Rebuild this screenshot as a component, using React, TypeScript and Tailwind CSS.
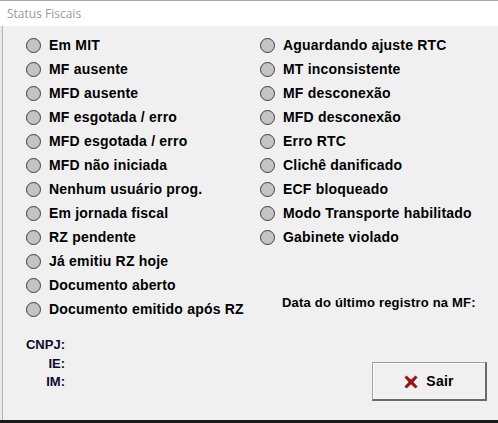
import React from "react";

const left = [
  "Em MIT",
  "MF ausente",
  "MFD ausente",
  "MF esgotada / erro",
  "MFD esgotada / erro",
  "MFD não iniciada",
  "Nenhum usuário prog.",
  "Em jornada fiscal",
  "RZ pendente",
  "Já emitiu RZ hoje",
  "Documento aberto",
  "Documento emitido após RZ",
];

const right = [
  "Aguardando ajuste RTC",
  "MT inconsistente",
  "MF desconexão",
  "MFD desconexão",
  "Erro RTC",
  "Clichê danificado",
  "ECF bloqueado",
  "Modo Transporte habilitado",
  "Gabinete violado",
];

function Led({ label }: { label: string }) {
  return (
    <div className="flex h-[24px] items-center">
      <span className="box-border h-[15px] w-[15px] shrink-0 rounded-full border border-[#3c3c3c] bg-[#c4c4c4]" />
      <span className="ml-[8px] whitespace-nowrap text-[14px] font-bold leading-none tracking-[0.2px] text-black">
        {label}
      </span>
    </div>
  );
}

export default function App() {
  return (
    <div
      className="relative flex h-[423px] w-[498px] flex-col overflow-hidden bg-[#f0f0f0]"
      style={{ fontFamily: '"Liberation Sans", Arial, sans-serif' }}
    >
      <div className="flex h-[26px] shrink-0 items-center border-t border-[#a8a8a8] bg-white pl-[7px]">
        <span
          className="text-[12px] text-[#9a9a9a]"
          style={{ fontFamily: '"Open Sans", "Noto Sans", sans-serif' }}
        >
          Status Fiscais
        </span>
      </div>
      <div className="flex flex-1">
        <div className="w-[3px] shrink-0 border-r border-[#b4b4b4] bg-[#e8e8e8]" />
        <div className="flex flex-1 flex-col pt-[7px]">
          <div className="flex">
            <div className="ml-[23px] flex w-[234px] flex-col">
              {left.map((l) => (
                <Led key={l} label={l} />
              ))}
            </div>
            <div className="flex flex-col">
              {right.map((l) => (
                <Led key={l} label={l} />
              ))}
              <div className="ml-[22px] mt-[46px] whitespace-nowrap text-[13px] font-bold leading-[16px] tracking-[0.2px] text-black">
                Data do último registro na MF:
              </div>
            </div>
          </div>
          <div className="flex">
            <div className="ml-[24px] mt-[15px] flex w-[38px] flex-col items-end text-[13px] font-bold leading-[18.5px] text-[#0a0a28]">
              <span>CNPJ:</span>
              <span>IE:</span>
              <span>IM:</span>
            </div>
            <button className="ml-[307px] mt-[41px] box-border flex h-[39px] w-[115px] items-center justify-center gap-[8px] border border-[#a0a0a0] border-b-2 border-r-2 border-b-[#6a6a6a] border-r-[#6a6a6a] bg-[#f0f0f0] shadow-[inset_1px_1px_0_#ffffff]">
              <svg width="14" height="14" viewBox="0 0 14 14" className="mt-[1px]">
                <path
                  d="M1 2.5 L2.5 1 L7 5.2 L11.5 1 L13 2.5 L8.8 7 L13 11.5 L11.5 13 L7 8.8 L2.5 13 L1 11.5 L5.2 7 Z"
                  fill="#a80f0f"
                  stroke="#6b0000"
                  strokeWidth="0.8"
                  strokeLinejoin="round"
                />
              </svg>
              <span className="text-[14px] font-bold tracking-[0.2px] text-black">Sair</span>
            </button>
          </div>
        </div>
      </div>
      <div className="h-[3px] shrink-0 bg-[#1a1a1a]" />
    </div>
  );
}
